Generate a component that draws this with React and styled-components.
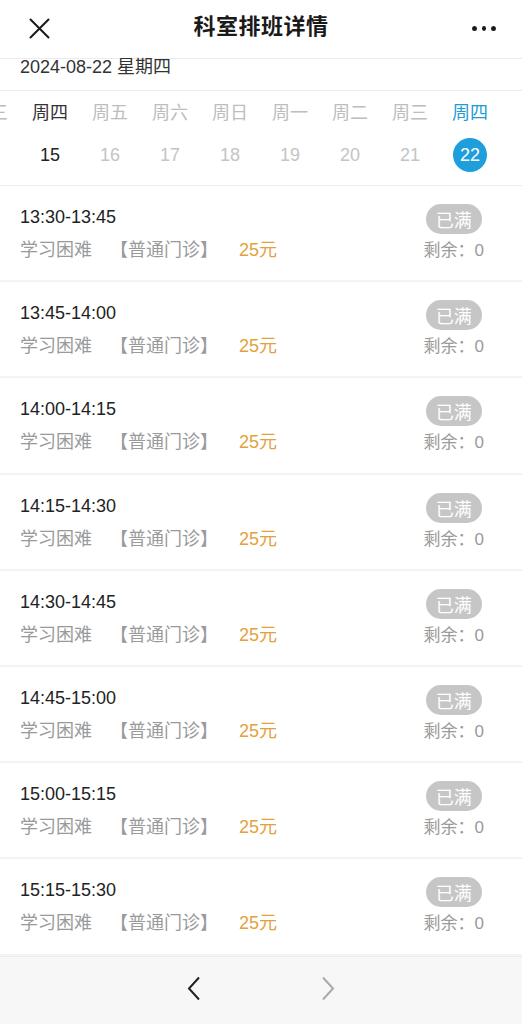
import React from "react";
import styled, { createGlobalStyle } from "styled-components";

const Global = createGlobalStyle`
  html, body { margin: 0; padding: 0; background: #fff; }
  body { font-family: "Liberation Sans", "Noto Sans CJK SC", sans-serif; -webkit-font-smoothing: antialiased; }
  * { box-sizing: border-box; }
`;

const Page = styled.div`
  width: 522px;
  height: 1024px;
  display: flex;
  flex-direction: column;
  overflow: hidden;
  background: #fff;
`;

const Header = styled.header`
  height: 59px;
  flex: none;
  display: flex;
  align-items: center;
  justify-content: space-between;
  padding: 0 26px 1px 28px;
  border-bottom: 1px solid #ececec;
`;

const Title = styled.h1`
  margin: 0;
  padding-bottom: 4px;
  font-size: 22px;
  line-height: 26px;
  font-weight: 700;
  color: #1a1a1a;
  letter-spacing: 0.5px;
`;

const IconBtn = styled.div`
  width: 22px;
  height: 22px;
  display: flex;
  align-items: center;
  justify-content: center;
`;

const Dots = styled.div`
  display: flex;
  gap: 5px;
  width: 24px;
  span {
    width: 5px;
    height: 5px;
    border-radius: 50%;
    background: #1a1a1a;
  }
`;

const DateRow = styled.div`
  height: 32px;
  flex: none;
  padding-left: 20px;
  font-size: 18px;
  line-height: 16px;
  color: #333;
  border-bottom: 1px solid #ececec;
`;

const Week = styled.div`
  height: 95px;
  flex: none;
  display: flex;
  margin-left: -40px;
  border-bottom: 1px solid #ececec;
`;

const Day = styled.div`
  width: 60px;
  flex: none;
  display: flex;
  flex-direction: column;
  align-items: center;
  padding-top: 10px;
`;

const WeekName = styled.div`
  height: 24px;
  line-height: 24px;
  font-size: 18px;
  color: ${(p) => (p.$tone === "selected" ? "#1e9bd6" : p.$tone === "active" ? "#333" : "#bdbdbd")};
  white-space: nowrap;
`;

const DayNum = styled.div`
  margin-top: 13px;
  width: 34px;
  height: 34px;
  border-radius: 50%;
  display: flex;
  align-items: center;
  justify-content: center;
  font-size: 18px;
  background: ${(p) => (p.$tone === "selected" ? "#1e9fdc" : "transparent")};
  color: ${(p) => (p.$tone === "selected" ? "#fff" : p.$tone === "active" ? "#222" : "#c4c4c4")};
`;

const List = styled.div`
  flex: none;
  display: flex;
  flex-direction: column;
`;

const Row = styled.div`
  height: 96.2px;
  flex: none;
  display: flex;
  justify-content: space-between;
  padding: 0 38px 0 20px;
  border-bottom: 2px solid #f4f4f4;
`;

const Left = styled.div`
  display: flex;
  flex-direction: column;
  padding-top: 19px;
  gap: 9px;
`;

const Time = styled.div`
  height: 24px;
  line-height: 24px;
  font-size: 18px;
  color: #222;
`;

const Sub = styled.div`
  height: 24px;
  line-height: 24px;
  font-size: 18px;
  color: #9a9a9a;
  display: flex;
  white-space: nowrap;
`;

const Kind = styled.span`
  margin-left: 18px;
`;

const Price = styled.span`
  margin-left: 21px;
  color: #e3a13e;
`;

const Right = styled.div`
  display: flex;
  flex-direction: column;
  align-items: center;
  padding-top: 18px;
  gap: 5px;
`;

const Badge = styled.div`
  width: 56px;
  height: 30px;
  border-radius: 15px;
  background: #c6c6c6;
  color: #fff;
  font-size: 18px;
  display: flex;
  align-items: center;
  justify-content: center;
`;

const Remain = styled.div`
  height: 24px;
  line-height: 24px;
  font-size: 17px;
  color: #9a9a9a;
  white-space: nowrap;
`;

const Footer = styled.footer`
  flex: 1;
  background: #f7f7f7;
  border-top: 1px solid #ececec;
  display: flex;
  align-items: center;
  justify-content: center;
  gap: 120px;
  padding-bottom: 2px;
`;

const days = [
  { w: "周三", n: "14", t: "muted" },
  { w: "周四", n: "15", t: "active" },
  { w: "周五", n: "16", t: "muted" },
  { w: "周六", n: "17", t: "muted" },
  { w: "周日", n: "18", t: "muted" },
  { w: "周一", n: "19", t: "muted" },
  { w: "周二", n: "20", t: "muted" },
  { w: "周三", n: "21", t: "muted" },
  { w: "周四", n: "22", t: "selected" },
];

const slots = [
  "13:30-13:45",
  "13:45-14:00",
  "14:00-14:15",
  "14:15-14:30",
  "14:30-14:45",
  "14:45-15:00",
  "15:00-15:15",
  "15:15-15:30",
];

export default function App() {
  return (
    <Page>
      <Global />
      <Header>
        <IconBtn>
          <svg width="21" height="21" viewBox="0 0 21 21">
            <path d="M1.5 1.5 L19.5 19.5 M19.5 1.5 L1.5 19.5" stroke="#1a1a1a" strokeWidth="2" strokeLinecap="round" />
          </svg>
        </IconBtn>
        <Title>科室排班详情</Title>
        <Dots>
          <span />
          <span />
          <span />
        </Dots>
      </Header>
      <DateRow>2024-08-22 星期四</DateRow>
      <Week>
        {days.map((d, i) => (
          <Day key={i}>
            <WeekName $tone={d.t}>{d.w}</WeekName>
            <DayNum $tone={d.t}>{d.n}</DayNum>
          </Day>
        ))}
      </Week>
      <List>
        {slots.map((s) => (
          <Row key={s}>
            <Left>
              <Time>{s}</Time>
              <Sub>
                <span>学习困难</span>
                <Kind>【普通门诊】</Kind>
                <Price>25元</Price>
              </Sub>
            </Left>
            <Right>
              <Badge>已满</Badge>
              <Remain>剩余：0</Remain>
            </Right>
          </Row>
        ))}
      </List>
      <Footer>
        <svg width="14" height="26" viewBox="0 0 14 26">
          <path d="M12 1.5 L2 12.5 L12 23.5" fill="none" stroke="#222" strokeWidth="2" strokeLinejoin="miter" />
        </svg>
        <svg width="14" height="26" viewBox="0 0 14 26">
          <path d="M2 1.5 L12 12.5 L2 23.5" fill="none" stroke="#aaa" strokeWidth="2" />
        </svg>
      </Footer>
    </Page>
  );
}
